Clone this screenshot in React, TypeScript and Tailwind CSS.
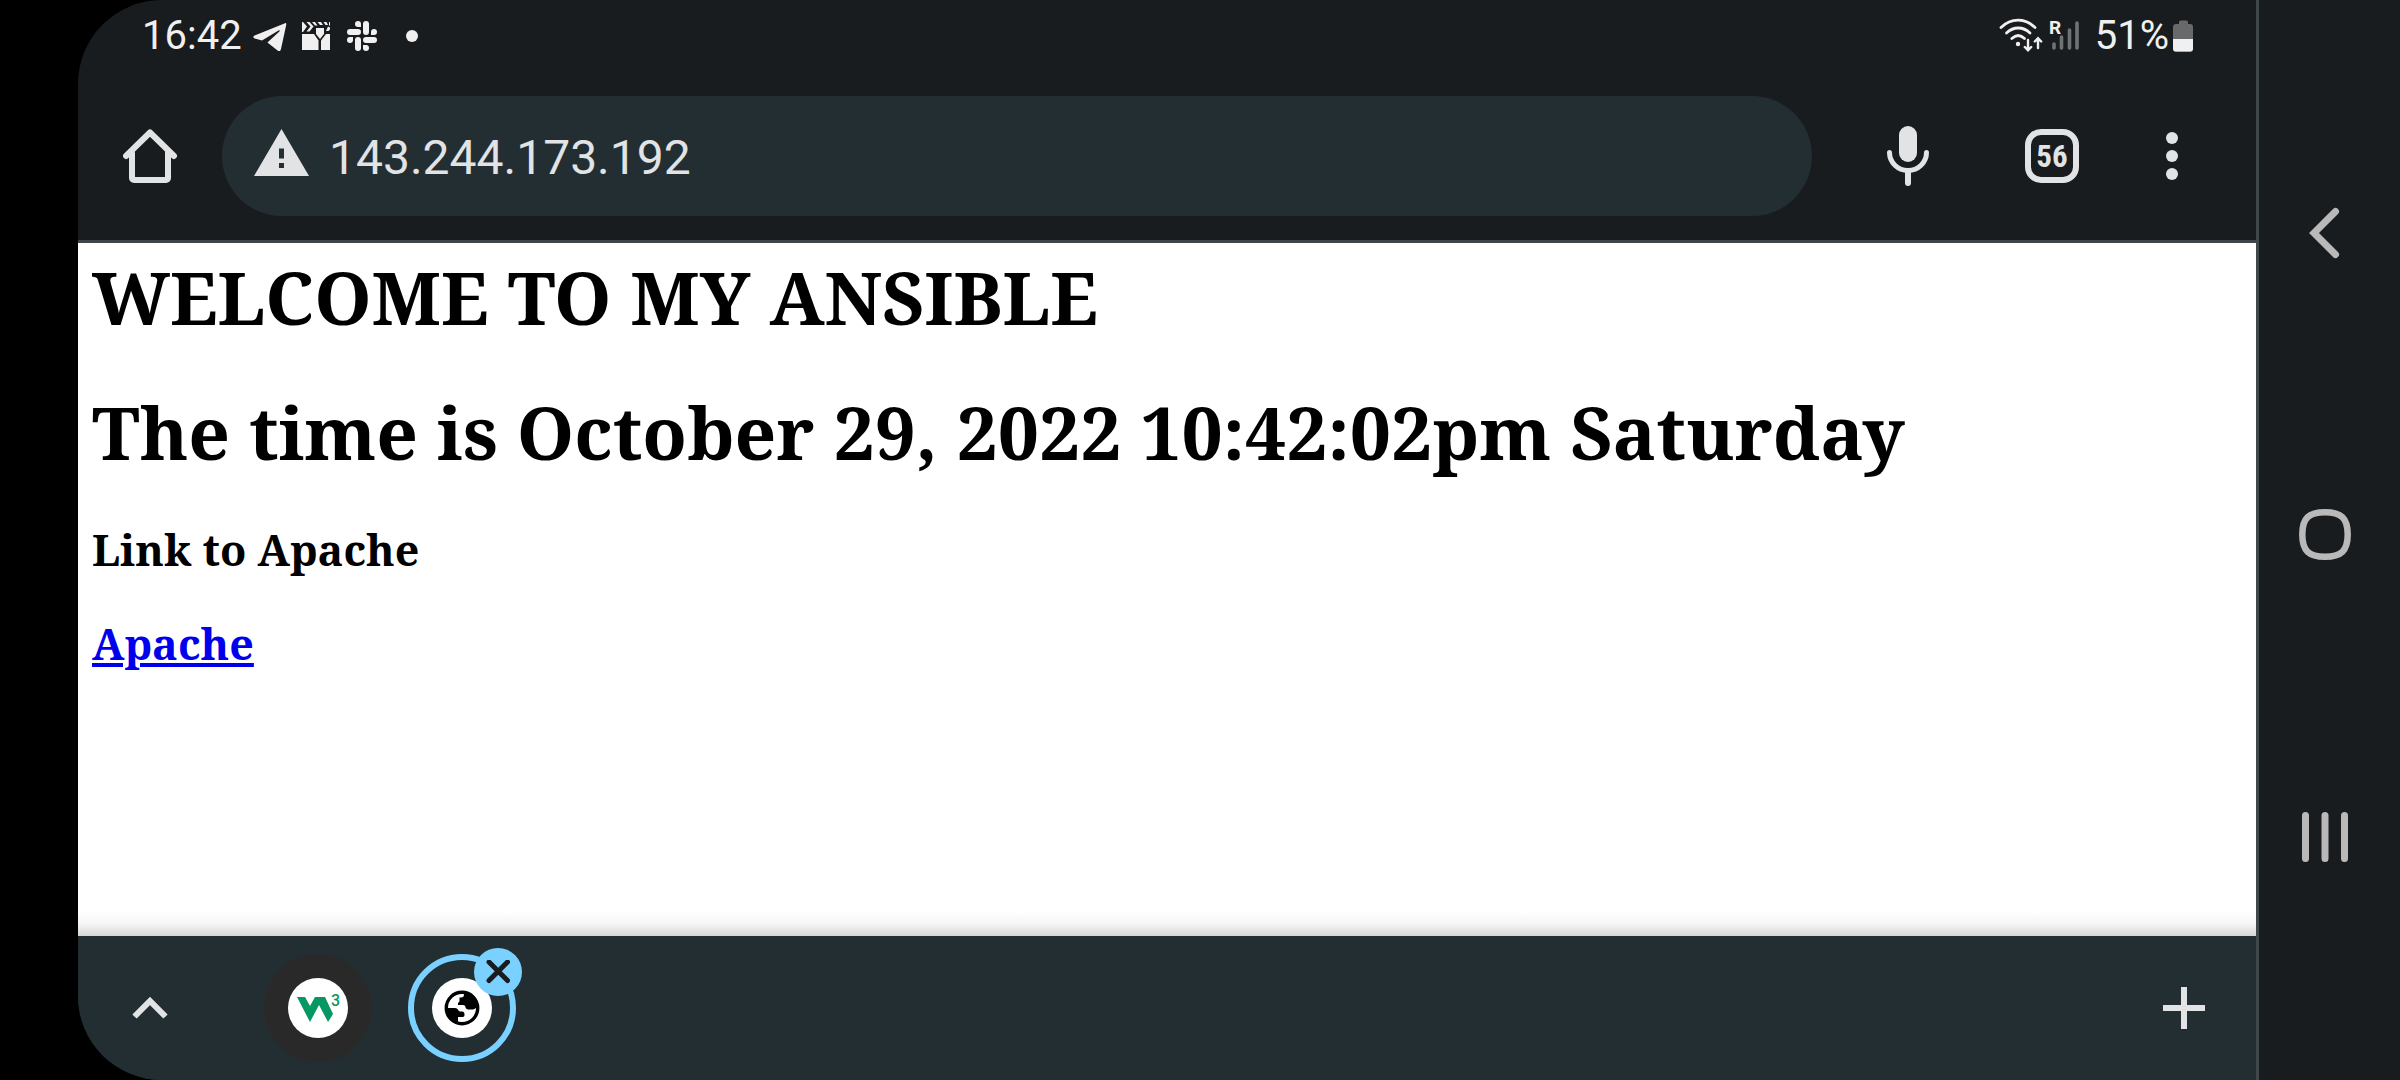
import type { ReactNode } from "react";

function StatusBar() {
  return (
    <header className="flex h-[72px] items-center justify-between pr-[63px] pl-16 text-[40px] leading-[48px] text-[#f0f0f0]">
      <div className="flex items-center gap-2.5">
        <time>16:42</time>
        <svg viewBox="0 0 36 36" className="size-9" fill="currentColor" role="img" aria-label="Telegram">
          <path d="M33 5.2 L2.6 17.6 C.8 18.5 1 19.8 2.8 20.5 L10 22.6 L26.5 12.4 C27.6 11.8 28.2 12.6 27.4 13.4 L15.4 24.6 L25.6 32.4 C27.2 33.6 28.6 33 29 31 L34.2 7 C34.5 5.3 34 4.8 33 5.2 Z" />
        </svg>
        <svg viewBox="0 0 36 36" className="size-9" fill="currentColor" role="img" aria-label="Gallery">
          <path d="M4 4h1l4 4.500-4 5.500h-1z M8.500 4h3l4 4.500-4 5h-3l4-5z M14 4h3l2.500 3.500h-2.500z M19.500 4h3.500l2 3h-3z M25.500 4h3l1.500 3h-2.500z M31 4h1v4l-1-1z M28 13l2-4.500 2 1v2l-1.500 1.500z" />
          <path d="M18 10h8v6l-4 5-4-5z" />
          <path d="M4 16h12l4.500 6.500V32H4z" />
          <path d="M28 16h4v16h-9V22.500z" />
        </svg>
        <svg viewBox="0 0 36 36" className="size-9" fill="currentColor" role="img" aria-label="Slack">
          <path d="M17 9h-3a3 3 0 1 1 3-3z" />
          <rect x="3" y="11" width="14" height="6" rx="3" />
          <rect x="19" y="3" width="6" height="14" rx="3" />
          <path d="M27 17v-3a3 3 0 1 1 3 3z" />
          <rect x="19" y="19" width="14" height="6" rx="3" />
          <path d="M19 27h3a3 3 0 1 1-3 3z" />
          <rect x="11" y="19" width="6" height="14" rx="3" />
          <path d="M9 19v3a3 3 0 1 1-3-3z" />
        </svg>
        <span className="ml-4 size-3 rounded-full bg-[#f0f0f0]" />
      </div>
      <div className="flex items-center">
        <svg viewBox="0 0 44 36" className="mr-1.5 h-9 w-11" fill="none" stroke="currentColor" strokeLinecap="round" role="img" aria-label="Wi-Fi">
          <g strokeWidth="2.800">
            <path d="M2 9.500C12-.300 26-.300 36 9.500" />
            <path d="M7.500 15C14.500 8.300 24 8.300 31 15" />
            <path d="M12.800 20.500C17 16.500 21.500 16.500 25.500 20.500" />
          </g>
          <circle cx="19" cy="26" r="2.200" fill="currentColor" stroke="none" />
          <path d="M29 22v10M25.800 29l3.200 3.200L32.200 29M39 30V20.500M35.800 23.500L39 20.300l3.200 3.200" strokeWidth="2.400" />
        </svg>
        <svg viewBox="0 0 30 36" className="mr-4 h-9 w-[30px] overflow-visible" role="img" aria-label="Roaming, no signal">
          <path d="M5 26v4M12.500 19v11M20.500 12v18M28 5v25" stroke="#707274" strokeWidth="3.600" strokeLinecap="round" />
          <text x="0" y="16" fill="currentColor" className="text-[19px] leading-none font-bold">R</text>
        </svg>
        <span className="mr-1">51%</span>
        <svg viewBox="0 0 20 36" className="h-9 w-5" role="img" aria-label="Battery">
          <path d="M6 4a1.500 1.500 0 0 1 1.500-1.500h6A1.500 1.500 0 0 1 15 4v2h2a3 3 0 0 1 3 3v22a3 3 0 0 1-3 3H3a3 3 0 0 1-3-3V9a3 3 0 0 1 3-3h3z" fill="#68696b" />
          <path d="M0 21h20v9.500a3 3 0 0 1-3 3H3a3 3 0 0 1-3-3z" fill="currentColor" />
        </svg>
      </div>
    </header>
  );
}

function BarButton({ label, wide = true, children }: { label: string; wide?: boolean; children: ReactNode }) {
  return (
    <button type="button" aria-label={label} className={`flex h-full shrink-0 items-center justify-center ${wide ? "w-36" : "w-24"}`}>
      {children}
    </button>
  );
}

function Toolbar() {
  return (
    <div className="flex h-[171px] items-stretch border-b-[3px] border-[#40474b] pr-9 text-[#e1e3e5]">
      <BarButton label="Home">
        <svg viewBox="0 0 54 54" className="size-[54px]" fill="none" stroke="currentColor" strokeWidth="6" strokeLinecap="round" strokeLinejoin="round">
          <path d="M3 27L27 3.500L51 27" />
          <path d="M9 24V49a2 2 0 0 0 2 2H43a2 2 0 0 0 2-2V24" />
        </svg>
      </BarButton>
      <label className="my-6 mr-6 flex min-w-0 flex-1 items-center gap-5 rounded-full bg-[#232e33] pr-10 pl-8">
        <svg viewBox="0 0 55 54" className="h-[54px] w-[55px] shrink-0" role="img" aria-label="Not secure">
          <path d="M27.500 0L55 47H0z M25 19.500v10h5v-10z M25 34v5h5v-5z" fill="currentColor" fillRule="evenodd" />
        </svg>
        <input
          type="text"
          aria-label="Address"
          defaultValue="143.244.173.192"
          className="min-w-0 flex-1 bg-transparent pt-1 text-[48px] leading-[56px] outline-none"
        />
      </label>
      <BarButton label="Voice search">
        <svg viewBox="0 0 42 60" className="h-[60px] w-[42px]" fill="none" stroke="currentColor" strokeLinecap="round">
          <rect x="12" y="0" width="18" height="36" rx="9" fill="currentColor" stroke="none" />
          <path d="M2.500 26.500a18.500 18 0 0 0 37 0" strokeWidth="5" />
          <path d="M21 45V57" strokeWidth="6" />
        </svg>
      </BarButton>
      <BarButton label="Tabs">
        <span className="flex size-[54px] items-center justify-center rounded-2xl border-[6px] border-current font-['Roboto_Condensed',Roboto,sans-serif] text-[31px] leading-none font-bold">
          56
        </span>
      </BarButton>
      <BarButton label="Menu" wide={false}>
        <span className="flex flex-col gap-1.5">
          <span className="size-3 rounded-full bg-current" />
          <span className="size-3 rounded-full bg-current" />
          <span className="size-3 rounded-full bg-current" />
        </span>
      </BarButton>
    </div>
  );
}

function Page() {
  return (
    <main className="flex flex-1 flex-col bg-white font-['Noto_Serif','Liberation_Serif',serif] font-bold text-black">
      <div className="flex flex-1 flex-col gap-9 px-[14px] pt-1">
        <h1 className="text-[73px] leading-[99px]">WELCOME TO MY ANSIBLE</h1>
        <h1 className="mb-1 text-[73px] leading-[99px]">The time is October 29, 2022 10:42:02pm Saturday</h1>
        <h3 className="text-[43px] leading-[58px]">Link to Apache</h3>
        <h3 className="text-[43px] leading-[58px]">
          <a href="#apache" className="text-[#0000ee] underline">Apache</a>
        </h3>
      </div>
      <div className="h-6 bg-linear-to-b from-white via-[#f5f5f5] to-[#d6d6d6]" />
    </main>
  );
}

function TabStrip() {
  return (
    <footer className="flex h-36 items-stretch bg-[#232e33] text-[#e1e3e5]">
      <BarButton label="Expand tabs">
        <svg viewBox="0 0 36 24" className="h-6 w-9" fill="none" stroke="currentColor" strokeWidth="6">
          <path d="M2.500 20.500L18 5L33.500 20.500" />
        </svg>
      </BarButton>
      <div className="ml-6 flex flex-1">
        <BarButton label="W3Schools tab">
          <span className="flex size-[108px] items-center justify-center rounded-full bg-[#292929]">
            <svg viewBox="0 0 60 60" className="size-[60px] rounded-full bg-white" fill="#059862">
              <path d="M9 19H17L22 28L27 19H37L45 36L40 44L31 27L22 44Z" />
              <text x="43" y="28" className="text-[16px] font-medium">3</text>
            </svg>
          </span>
        </BarButton>
        <div className="relative">
          <BarButton label="Current tab">
            <span className="flex size-[108px] items-center justify-center rounded-full border-[6px] border-[#7ad1ff]">
              <span className="flex size-[60px] items-center justify-center rounded-full bg-white">
                <svg viewBox="0 0 36 36" className="size-9" fill="#000">
                  <circle cx="18" cy="18" r="15.700" fill="none" stroke="#000" strokeWidth="3.400" />
                  <path d="M20 1.500V4.500C20 6.500 19 7.500 17 7.500H15.500V10.500C15.500 12 14.500 12.500 14 13V15H19C21 15 21.500 16.500 21.500 17.500C22 19 23.500 19.500 25 19.500H28.500C30.500 19.500 31.500 17.500 34.500 17.500C34.500 9 28 2.500 20 1.500Z" />
                  <path d="M1.500 18H11C14 18 14.500 21.500 16 21.500H18C20 21.500 20.500 23 20.500 25C20.500 26.500 19.500 27 18 27H14V34C7 32.500 1.500 26 1.500 18Z" />
                </svg>
              </span>
            </span>
          </BarButton>
          <button
            type="button"
            aria-label="Close tab"
            className="absolute top-3 right-3 flex size-12 items-center justify-center rounded-full bg-[#7ad1ff] text-[#191c1e]"
          >
            <svg viewBox="0 0 24 24" className="size-6" fill="none" stroke="currentColor" strokeWidth="5" strokeLinecap="round">
              <path d="M3 2L21.500 20.500M21.500 2L3 20.500" />
            </svg>
          </button>
        </div>
      </div>
      <BarButton label="New tab">
        <svg viewBox="0 0 42 42" className="size-[42px]" stroke="currentColor" strokeWidth="6">
          <path d="M21 0V42M0 21H42" />
        </svg>
      </BarButton>
    </footer>
  );
}

function SystemNav() {
  return (
    <nav className="flex w-36 shrink-0 flex-col items-center justify-between border-l-[3px] border-[#40474b] bg-[#191c1e] pt-[207px] pr-[9px] pb-[217px] text-[#b9b9b9]">
      <button type="button" aria-label="Back">
        <svg viewBox="0 0 52 52" className="size-[52px]" fill="none" stroke="currentColor" strokeWidth="7" strokeLinecap="round">
          <path d="M36.500 4.500L15 26L36.500 47.500" />
        </svg>
      </button>
      <button type="button" aria-label="Home screen">
        <svg viewBox="0 0 52 52" className="size-[52px]" fill="none" stroke="currentColor" strokeWidth="6.500">
          <path d="M26 3.300C42 3.300 48.700 9 48.700 25.500S42 47.700 26 47.700S3.300 42 3.300 25.500S10 3.300 26 3.300Z" />
        </svg>
      </button>
      <button type="button" aria-label="Recent apps">
        <svg viewBox="0 0 52 52" className="size-[52px]" stroke="currentColor" strokeWidth="7" strokeLinecap="round">
          <path d="M6.500 4.500V47.500M26 4.500V47.500M45.500 4.500V47.500" />
        </svg>
      </button>
    </nav>
  );
}

export default function App() {
  return (
    <div className="flex min-h-screen bg-black pl-[78px] font-[Roboto,sans-serif]">
      <div className="flex min-w-0 flex-1 flex-col overflow-hidden rounded-l-[84px] bg-[#191c1e]">
        <StatusBar />
        <Toolbar />
        <Page />
        <TabStrip />
      </div>
      <SystemNav />
    </div>
  );
}
